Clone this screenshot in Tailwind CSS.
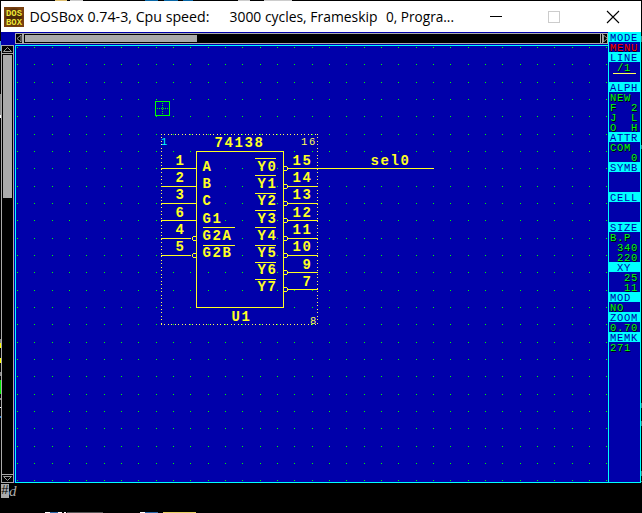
<!DOCTYPE html>
<html lang="en">
<head>
<meta charset="utf-8">
<title>DOSBox</title>
<script src="https://cdn.jsdelivr.net/npm/@tailwindcss/browser@4"></script>
</head>
<body class="bg-black overflow-hidden">
<div class="relative w-[642px] h-[513px] bg-black pl-px pt-px pr-px flex flex-col overflow-hidden">
  <!-- Title bar -->
  <header class="h-[31px] shrink-0 bg-white flex items-center">
    <svg class="ml-[3px] w-5 h-5 shrink-0" viewBox="0 0 20 20">
      <defs><radialGradient id="ic"><stop offset="0" stop-color="#4a2a08"/><stop offset=".65" stop-color="#4c2606"/><stop offset="1" stop-color="#7a4210"/></radialGradient></defs>
      <rect width="20" height="20" fill="url(#ic)"/>
      <g font-family="Liberation Mono, monospace" font-weight="700" font-size="9.5" fill="#f0e838">
        <text x="2" y="9" textLength="16" lengthAdjust="spacingAndGlyphs">DOS</text>
        <text x="2" y="18" textLength="16" lengthAdjust="spacingAndGlyphs">BOX</text>
      </g>
    </svg>
    <svg class="ml-[5px] w-[440px] h-[31px] shrink-0" viewBox="0 0 440 31" font-family="Open Sans, Noto Sans, sans-serif" font-size="15" fill="#000">
      <text x="0.5" y="21" textLength="180" lengthAdjust="spacingAndGlyphs">DOSBox 0.74-3, Cpu speed:</text>
      <text x="200.500" y="21" textLength="148" lengthAdjust="spacingAndGlyphs">3000 cycles, Frameskip</text>
      <text x="357" y="21" textLength="68" lengthAdjust="spacingAndGlyphs">0, Progra...</text>
    </svg>
    <svg class="ml-auto mr-[21px] w-[134px] h-[14px]" viewBox="0 0 134 14" fill="none">
      <path d="M4 6.5h12" stroke="#000"/>
      <rect x="62.5" y="1.5" width="11" height="11" stroke="#ccc"/>
      <path d="M121 1l12 12M133 1l-12 12" stroke="#000" stroke-width="1.1"/>
    </svg>
  </header>

  <!-- DOS screen -->
  <main class="h-[451px] shrink-0 bg-[#0000aa] flex">
    <svg class="w-[607px] h-[451px] shrink-0" viewBox="1 32 607 451" fill="none" shape-rendering="crispEdges">
      <defs>
        <pattern id="dots" x="17" y="47" width="52" height="52" patternUnits="userSpaceOnUse">
          <path fill="#00ff00" d="M0 0h1v1H0zM17 0h1v1h-1zM35 0h1v1h-1zM0 17h1v1H0zM17 17h1v1h-1zM35 17h1v1h-1zM0 35h1v1H0zM17 35h1v1h-1zM35 35h1v1h-1z"/>
        </pattern>
      </defs>
      <!-- scrollbars -->
      <rect x="15.5" y="33.5" width="592" height="10" fill="#000" stroke="#aaa"/>
      <rect x="25" y="35" width="172" height="7" fill="#aaa"/>
      <path d="M22.5 34v9M23.5 34v9M600.5 34v9M602.5 34v9" stroke="#aaa"/>
      <path d="M21 35l-4 3.500 4 3.500zM603.500 35l4 3.500-4 3.500z" stroke="#aaa" stroke-width=".9" shape-rendering="auto"/>
      <rect x="1.500" y="45.500" width="12" height="437" fill="#000" stroke="#aaa"/>
      <rect x="3" y="55" width="9" height="143" fill="#aaa"/>
      <path d="M2 53.500h11M2 474.500h11" stroke="#aaa"/>
      <path d="M3.500 51.500h8l-4-4zM3.500 476.500h8l-4 4z" stroke="#aaa" stroke-width=".9" shape-rendering="auto"/>
      <!-- canvas -->
      <path d="M608 45.500H15.500V482.500H608" stroke="#00ffff"/>
      <rect x="16" y="46" width="592" height="436" fill="url(#dots)"/>
      <g stroke="#00ff00">
        <rect x="155.500" y="101.500" width="14" height="14"/>
        <path d="M157 108.500h12M162.500 103v12" stroke-dasharray="1 1"/>
      </g>
      <g stroke="#ffff55" stroke-dasharray="1 2 1 3">
        <path d="M161 134.500h157"/>
        <path d="M161 324.500h157"/>
        <path d="M161.500 134v191"/>
        <path d="M317.500 134v191"/>
      </g>
      <g id="pins" stroke="#ffff22">
        <rect x="196.500" y="151.500" width="87" height="156"/>
      </g>
      <g id="labels" fill="#ffff22" font-family="Liberation Mono, monospace" font-weight="700" font-size="14" letter-spacing="1.600"></g>
      <g font-family="Liberation Mono, monospace" font-size="10.500" fill="#ffff55">
        <text x="161" y="145" fill="#00ffff">1</text>
        <text x="301" y="145" letter-spacing="1.700">16</text>
        <text x="310" y="324">8</text>
      </g>
    </svg>

    <!-- Side menu -->
    <aside class="w-[33px] h-[451px] shrink-0 border-x border-b border-[#00ffff] font-['Liberation_Mono',monospace] text-[10.5px] leading-[12px] tracking-[0.7px] whitespace-pre text-[#00ff00] [&>p]:h-[10px] [&>p]:pl-px [&>p]:[text-shadow:1px_1px_0_#000] [&>h2]:h-[10px] [&>h2]:pl-px [&>h2]:bg-[#00ffff] [&>h2]:text-[#0000aa]"><h2>MODE</h2><p class="text-[#ff0000]">MENU</p><h2>LINE</h2><p> /1</p><div class="h-[10px] pt-px pl-[4px]"><div class="w-[23px] h-px bg-[#ffff55]"></div></div><h2>ALPH</h2><p>NEW</p><p>F  2</p><p>J  L</p><p>O  H</p><h2>ATTR</h2><p>COM</p><p>   0</p><h2>SYMB</h2><div class="h-5"></div><h2>CELL</h2><div class="h-5"></div><h2>SIZE</h2><p>B.P</p><p> 340</p><p> 220</p><h2> XY</h2><p>  25</p><p>  11</p><h2>MOD</h2><p>NO</p><h2>ZOOM</h2><p>0.70</p><h2>MEMK</h2><p>271</p></aside>
  </main>

  <!-- Command line -->
  <footer class="flex pt-px font-['Liberation_Mono',monospace] text-[13px] leading-[14px]">
    <span class="w-2 h-[14px] bg-[#aaaaaa] text-black text-center">#</span>
    <span class="w-2 h-[14px] text-[#aaaaaa] italic font-['Liberation_Serif',serif] text-[15px]">d</span>
  </footer>

  <!-- Desktop showing round the window edges -->
  <svg class="absolute inset-0 w-[642px] h-[513px]" viewBox="0 0 642 513" shape-rendering="crispEdges">
    <path fill="#e0c070" d="M55 0h12v1H55z"/><path fill="#ccc" d="M70 0h13v1H70zM238 0h12v1h-12zM264 0h28v1h-28z"/>
    <path fill="#0868a8" d="M145 0h13v1h-13zM164 0h14v1h-14zM183 0h10v1h-10z"/>
    <path fill="#48a0d8" d="M0 41h1v10H0z"/><path fill="#888" d="M0 94h1v21H0zM0 339h1v4H0zM0 372h1v4H0zM0 398h1v2H0z"/>
    <path fill="#fff" d="M0 115h1v3H0zM0 407h1v1H0z"/><path fill="#ff0" d="M0 343h1v5H0zM0 358h1v5H0z"/>
    <path fill="#00e800" d="M0 380h1v14H0z"/><path fill="#2878c0" d="M0 416h1v2H0z"/>
    <path fill="#fff" d="M45 512h5v1h-5zM58 512h4v1h-4zM64 512h2v1h-2zM140 512h5v1h-5z"/><path fill="#2868a8" d="M50 512h8v1h-8zM145 512h13v1h-13z"/><path fill="#555" d="M67 512h36v1H67z"/>
    <path fill="#e8d060" d="M163 512h33v1h-33z"/>
    <path fill="#407878" d="M641 36h1v6h-1zM641 145h1v4h-1zM641 403h1v5h-1zM641 421h1v5h-1zM641 471h1v5h-1zM641 481h1v1h-1z"/>
  </svg>
</div>
<script>
const NS = 'http://www.w3.org/2000/svg';
const pins = document.getElementById('pins'), labels = document.getElementById('labels');
const line = d => { const p = document.createElementNS(NS, 'path'); p.setAttribute('d', d); pins.appendChild(p); };
const text = (s, x, y) => {
  const t = document.createElementNS(NS, 'text');
  t.setAttribute('x', x + .6); t.setAttribute('y', y);
  t.textContent = s; labels.appendChild(t);
};
const lineY = [168, 186, 203, 220, 238, 255, 272, 289];
const numY = [165, 182, 199, 217, 234, 251, 269, 286];
const nameY = [171, 188, 205, 223, 240, 257, 274, 291];
const overY = [158, 175, 193, 210, 227, 245, 262, 279];
[['1', 'A'], ['2', 'B'], ['3', 'C'], ['6', 'G1'], ['4', 'G2A'], ['5', 'G2B']].forEach(([n, name], i) => {
  const y = lineY[i] + .5, low = i > 3;
  line(`M161 ${y}H${low ? 191 : 196}`);
  if (low) {
    line(`M196 ${y - 2}h-3M192.5 ${y - 1.5}v3M196 ${y + 2}h-3`);
    line(`M203 ${overY[i] + .5}h32`);
  }
  text(n, 175, numY[i]);
  text(name, 202, nameY[i]);
});
['15', '14', '13', '12', '11', '10', '9', '7'].forEach((n, i) => {
  const y = lineY[i] + .5;
  line(`M288 ${y}H${i ? 318 : 434}`);
  line(`M284 ${y - 2}h3M287.5 ${y - 1.5}v3M284 ${y + 2}h3`);
  line(`M255 ${overY[i] + .5}h21`);
  text(n, n.length > 1 ? 292 : 302, numY[i]);
  text('Y' + i, 257, nameY[i]);
});
text('74138', 214, 147);
text('U1', 231, 321);
text('sel0', 370, 165);
</script>
</body>
</html>
